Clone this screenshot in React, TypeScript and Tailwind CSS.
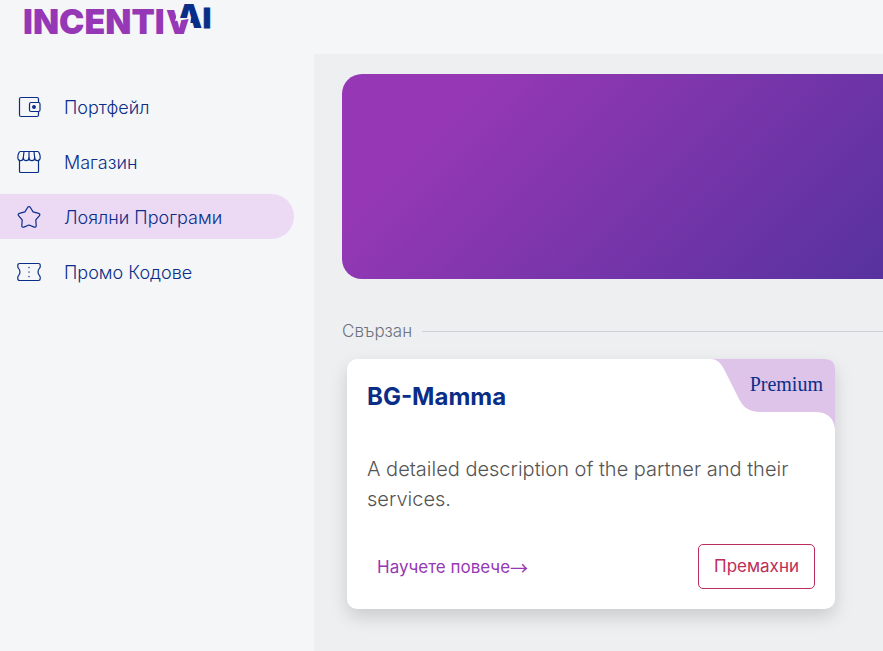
import type { ReactNode } from 'react';

function Icon({ children }: { children: ReactNode }) {
  return (
    <svg
      viewBox="0 0 24 24"
      className="size-6 shrink-0"
      fill="none"
      stroke="currentColor"
      strokeWidth="1.2"
      strokeLinecap="round"
      strokeLinejoin="round"
      aria-hidden="true"
    >
      {children}
    </svg>
  );
}

const navItems = [
  {
    label: 'Портфейл',
    active: false,
    icon: (
      <Icon>
        <path d="M21.5 7.5V4A1.5 1.5 0 0 0 20 2.5H4A1.5 1.5 0 0 0 2.5 4v16A1.5 1.5 0 0 0 4 21.5h16a1.5 1.5 0 0 0 1.5-1.5v-3.5" />
        <rect x="12.5" y="7.5" width="10.5" height="9" rx="1.5" />
        <circle cx="17" cy="12" r="1.3" fill="currentColor" />
      </Icon>
    ),
  },
  {
    label: 'Магазин',
    active: false,
    icon: (
      <Icon>
        <path d="M2.5 10v11.2c0 .8.5 1.3 1.3 1.3h16.4c.8 0 1.3-.5 1.3-1.3V10" />
        <path d="M3.3 1.5h17.4c1.3 0 2.5 3.3 2.5 5.8 0 2.2-1.2 3.4-2.7 3.4-1.6 0-2.8-1.2-2.8-3 0 1.8-1.2 3-2.8 3S12 9.5 12 7.7c0 1.8-1.3 3-2.9 3s-2.8-1.2-2.8-3c0 1.8-1.2 3-2.8 3S.8 9.5.8 7.3C.8 4.8 2 1.5 3.3 1.5z" />
        <path d="M7 1.5l-.7 6.2M12 1.5v6.2M17 1.5l.7 6.2" />
      </Icon>
    ),
  },
  {
    label: 'Лоялни Програми',
    active: true,
    icon: (
      <Icon>
        <path d="M10.8 2.2a1.5 1.5 0 0 1 2.4 0l2.9 4.7 5.6 1.4a1.4 1.4 0 0 1 .8 2.3l-3.7 4.3.4 5.8a1.4 1.4 0 0 1-2 1.4L12 20l-5.2 2.1a1.4 1.4 0 0 1-2-1.4l.4-5.8-3.7-4.3a1.4 1.4 0 0 1 .8-2.3l5.6-1.4z" />
      </Icon>
    ),
  },
  {
    label: 'Промо Кодове',
    active: false,
    icon: (
      <Icon>
        <path d="M2.5 3.5h19a1.7 1.7 0 0 1 1.7 1.7v1.6c0 .6-.2 1-.6 1.4a5.4 5.4 0 0 0 0 7.6c.4.4.6.8.6 1.4v1.6a1.7 1.7 0 0 1-1.7 1.7h-19a1.7 1.7 0 0 1-1.7-1.7v-1.600c0-.6.2-1 .6-1.4a5.4 5.4 0 0 0 0-7.6c-.4-.4-.6-.8-.6-1.4V5.200a1.7 1.7 0 0 1 1.7-1.7z" />
        <path d="M12 7.3v.4M12 11.8v.4M12 16.3v.4" />
      </Icon>
    ),
  },
];

function Logo() {
  return (
    <svg viewBox="0 0 200 48" className="h-12 w-[200px] overflow-visible" role="img" aria-label="INCENTIVAI">
      {/* the V and the A interlock, each one stops where the other begins */}
      <clipPath id="logo-v">
        <path d="M140 0H160L154 21L168 19V44H140z" />
      </clipPath>
      <clipPath id="logo-a">
        <path d="M156 0H190V44H167L170 18H156z" />
      </clipPath>
      <g className="font-['Inter'] font-black">
        <text x="2" y="34" fontSize="34" fill="#9638b5">INCENTI</text>
        <g clipPath="url(#logo-v)">
          <text x="145" y="34" fontSize="33" fill="#9638b5">V</text>
        </g>
        <g clipPath="url(#logo-a)">
          <text x="155" y="28" fontSize="33" fill="#0a2e88">A</text>
        </g>
        <text x="182" y="28" fontSize="27" fill="#0a2e88" stroke="#0a2e88" strokeWidth="1">I</text>
      </g>
    </svg>
  );
}

function Sidebar() {
  return (
    <aside className="w-[314px] shrink-0 pt-[30px] pr-5">
      <nav className="flex flex-col gap-2.5">
        {navItems.map(item => (
          <a
            key={item.label}
            href="#"
            aria-current={item.active ? 'page' : undefined}
            className={`flex h-[45px] items-center gap-[23px] rounded-r-full pl-[17px] text-lg font-light text-[#0a2e88] ${item.active ? 'bg-[#ecdaf5]' : ''}`}
          >
            {item.icon}
            <span className="pt-0.5">{item.label}</span>
          </a>
        ))}
      </nav>
    </aside>
  );
}

function PartnerCard() {
  return (
    <article className="relative mx-[5px] max-w-[488px] rounded-[10px] bg-white p-5 shadow-[0_8px_18px_rgba(0,0,0,0.15)]">
      <div className="absolute top-0 right-0">
        <svg viewBox="0 0 124 70" className="h-[70px] w-[124px]" aria-hidden="true">
          <path
            d="M0 0H114Q124 0 124 10V70Q122 53 104 53H49C38 53 32 48 28 40L14 12C10 4 6 0 0 0z"
            fill="#dec4e9"
          />
        </svg>
        <span className="absolute top-2.5 right-3 font-['Liberation_Serif',serif] text-xl leading-[30px] text-[#0a2e88]">
          Premium
        </span>
      </div>
      <h2 className="text-2xl leading-9 font-bold text-[#0a2e88]">BG-Mamma</h2>
      <p className="mt-[39px] text-xl leading-[30px] font-light text-[#555]">
        A detailed description of the partner and their services.
      </p>
      <div className="mt-[30px] flex items-center justify-between pl-2.5 text-[17px]">
        <a href="#" className="flex items-center leading-6 text-[#9638b5]">
          Научете повече
          <span className="font-['Noto_Sans_CJK_SC',sans-serif] text-lg leading-6">→</span>
        </a>
        <button
          type="button"
          className="h-[45px] rounded-[5px] border border-[#bd2d5b] px-[15px] text-[#bd2d5b]"
        >
          Премахни
        </button>
      </div>
    </article>
  );
}

export default function App() {
  return (
    <div className="flex min-h-screen flex-col overflow-x-hidden bg-[#f5f6f8] font-['Inter',sans-serif]">
      <header className="h-[54px] pl-[21px]">
        <Logo />
      </header>
      <div className="flex flex-1">
        <Sidebar />
        <main className="min-w-0 flex-1 bg-[#eeeff1] pt-5 pl-7">
          <div className="h-[205px] rounded-l-[20px] bg-linear-[135deg,#9638b5_19%,#57329f_100%]" />
          <section className="mt-10">
            <div className="mb-[15px] flex items-center gap-2.5">
              <h1 className="text-[17px] leading-[25px] font-light text-[#6c737f]">Свързан</h1>
              <div className="h-px flex-1 bg-[#ced2d8]" />
            </div>
            <PartnerCard />
          </section>
        </main>
      </div>
    </div>
  );
}
